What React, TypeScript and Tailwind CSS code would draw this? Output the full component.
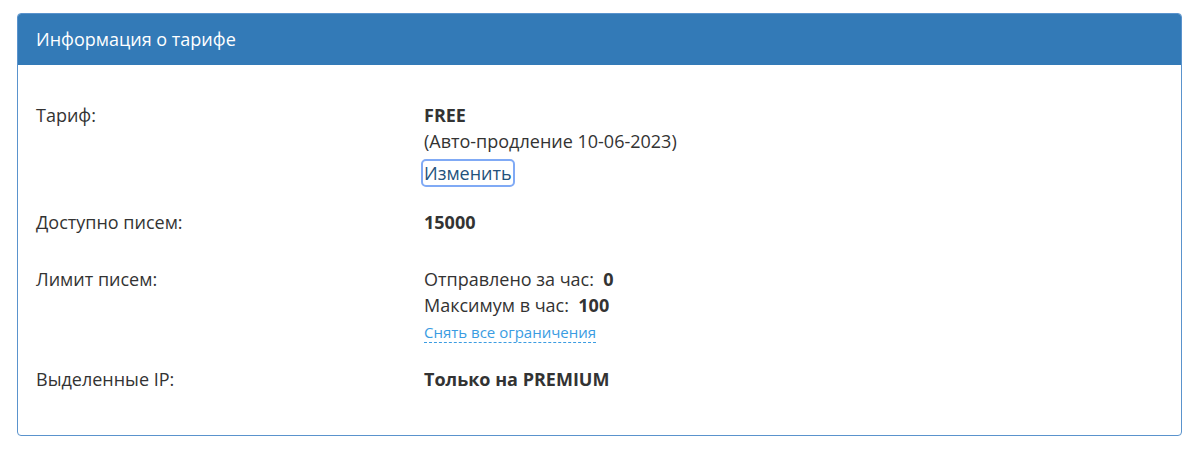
const font = { fontFamily: '"Open Sans", "Noto Sans", sans-serif' };

function Row({ label, children, className = '' }: { label: string; children: React.ReactNode; className?: string }) {
  return (
    <div className={`grid grid-cols-[388px_1fr] ${className}`}>
      <div className="leading-[26px]">{label}</div>
      <div className="leading-[26px]">{children}</div>
    </div>
  );
}

export default function App() {
  return (
    <div className="bg-white min-h-screen pt-[13px] pl-[17px] pr-[18px] text-[#333] text-[18px]" style={font}>
      <div className="border border-[#5a93cd] rounded-[4px] overflow-hidden">
        <div className="bg-[#337ab7] h-[51px] px-[18px] flex items-center text-white text-[18px]">
          Информация о тарифе
        </div>
        <div className="pt-[37px] pb-[43px] px-[18px]">
          <Row label="Тариф:">
            <div className="font-bold">FREE</div>
            <div>(Авто-продление 10-06-2023)</div>
            <div className="mt-[6px] h-[26px]">
              <span className="inline-block -ml-[1px] px-[1px] rounded-[3px] outline-2 outline-[#80aaf5] text-[#23527c] leading-[24px]">
                <span className="border-b border-dashed border-[#23527c]">Изменить</span>
              </span>
            </div>
          </Row>
          <Row label="Доступно писем:" className="mt-[23px]">
            <span className="font-bold">15000</span>
          </Row>
          <Row label="Лимит писем:" className="mt-[31px]">
            <div>
              Отправлено за час:&nbsp;&nbsp;<span className="font-bold">0</span>
            </div>
            <div>
              Максимум в час:&nbsp;&nbsp;<span className="font-bold">100</span>
            </div>
            <div className="mt-[4px] leading-[20px] text-[15px]">
              <span className="text-[#3a9ce2] border-b border-dashed border-[#3a9ce2]">Снять все ограничения</span>
            </div>
          </Row>
          <Row label="Выделенные IP:" className="mt-[24px]">
            <span className="font-bold">Только на PREMIUM</span>
          </Row>
        </div>
      </div>
    </div>
  );
}
